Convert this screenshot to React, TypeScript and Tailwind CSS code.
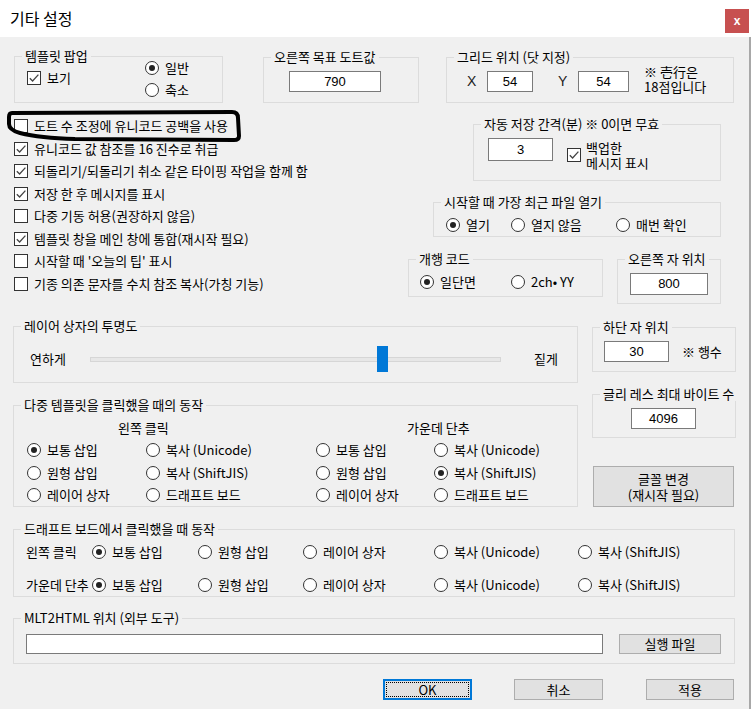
import type { ReactNode } from "react";

function Group({
  label,
  className = "",
  children,
}: {
  label: string;
  className?: string;
  children?: ReactNode;
}) {
  return (
    <div className={`relative shrink-0 border border-[#dcdcdc] ${className}`}>
      <span className="absolute -top-[8px] left-[7px] whitespace-nowrap bg-[#f0f0f0] px-[3px] leading-[14px]">
        {label}
      </span>
      {children}
    </div>
  );
}

function Tick() {
  return (
    <svg width="12" height="12" viewBox="0 0 12 12">
      <path d="M1.8 6.2 L4.6 9 L10.4 2.6" fill="none" stroke="#444" strokeWidth="1.3" />
    </svg>
  );
}

function Check({ on, children, className = "" }: { on?: boolean; children: ReactNode; className?: string }) {
  return (
    <div className={`flex items-center gap-[6px] whitespace-nowrap ${className}`}>
      <span className="flex size-[14px] shrink-0 items-center justify-center border border-[#333] bg-white">
        {on && <Tick />}
      </span>
      <span>{children}</span>
    </div>
  );
}

function Radio({ on, children, className = "" }: { on?: boolean; children: ReactNode; className?: string }) {
  return (
    <div className={`flex h-[14px] items-center gap-[6px] whitespace-nowrap ${className}`}>
      <span className="flex size-[14px] shrink-0 items-center justify-center rounded-full border border-[#333] bg-white">
        {on && <span className="size-[6px] rounded-full bg-[#222]" />}
      </span>
      <span>{children}</span>
    </div>
  );
}

function Field({ value = "", className = "" }: { value?: string; className?: string }) {
  return (
    <div
      className={`flex shrink-0 items-center justify-center border border-[#7a7a7a] bg-white font-['Liberation_Sans',sans-serif] text-[13px] ${className}`}
    >
      {value}
    </div>
  );
}

function Btn({ children, className = "" }: { children: ReactNode; className?: string }) {
  return (
    <div className={`flex shrink-0 items-center justify-center border border-[#adadad] bg-[#e1e1e1] ${className}`}>
      {children}
    </div>
  );
}

const options = [
  { on: false, text: "도트 수 조정에 유니코드 공백을 사용" },
  { on: true, text: "유니코드 값 참조를 16 진수로 취급" },
  { on: true, text: "되돌리기/되돌리기 취소 같은 타이핑 작업을 함께 함" },
  { on: true, text: "저장 한 후 메시지를 표시" },
  { on: false, text: "다중 기동 허용(권장하지 않음)" },
  { on: true, text: "템플릿 창을 메인 창에 통합(재시작 필요)" },
  { on: false, text: "시작할 때 '오늘의 팁' 표시" },
  { on: false, text: "기종 의존 문자를 수치 참조 복사(가칭 기능)" },
];

export default function App() {
  return (
    <div className="relative h-[709px] w-[751px] overflow-hidden bg-[#f0f0f0] font-['Noto_Sans_CJK_KR','Noto_Sans_CJK_JP',sans-serif] text-[13px] leading-[14px] text-black">
      <header className="flex h-[37px] items-start justify-between bg-white">
        <h1 className="ml-[10px] mt-[8px] text-[16px] leading-[20px]">기타 설정</h1>
        <div className="mr-[2px] mt-[9px] flex size-[24px] items-center justify-center bg-[#c75050] font-['Liberation_Sans',sans-serif] text-[12px] font-bold text-white">
          x
        </div>
      </header>

      <div className="h-[672px] border-r-2 border-[#a8a8a8]">
        {/* top row */}
        <div className="flex items-start pt-[19px]">
          <Group label="템플릿 팝업" className="ml-[14px] h-[47px] w-[209px]">
            <div className="grid grid-cols-[118px_auto] items-start pl-[12px]">
              <Check on className="mt-[14px]">보기</Check>
              <div className="mt-[4px] flex flex-col gap-[8px]">
                <Radio on>일반</Radio>
                <Radio>축소</Radio>
              </div>
            </div>
          </Group>
          <Group label="오른쪽 목표 도트값" className="ml-[40px] mt-[1px] h-[46px] w-[156px]">
            <Field value="790" className="ml-[25px] mt-[13px] h-[21px] w-[92px]" />
          </Group>
          <Group label="그리드 위치 (닷 지정)" className="ml-[27px] mt-[1px] h-[46px] w-[288px]">
            <div className="mt-[13px] flex items-start">
              <span className="ml-[20px] w-[20px] font-['Liberation_Sans',sans-serif] text-[14px] leading-[21px] text-[#222]">
                X
              </span>
              <Field value="54" className="h-[21px] w-[46px]" />
              <span className="ml-[25px] w-[20px] font-['Liberation_Sans',sans-serif] text-[14px] leading-[21px] text-[#222]">
                Y
              </span>
              <Field value="54" className="h-[21px] w-[51px]" />
              <div className="ml-[15px] -mt-[7px] leading-[15px]">
                <div>※ 壱行은</div>
                <div>18점입니다</div>
              </div>
            </div>
          </Group>
        </div>

        {/* middle row */}
        <div className="flex items-start">
          <div className="w-[408px] pl-[14px] pt-[12px]">
            {options.map((o) => (
              <Check key={o.text} on={o.on} className="h-[22.5px]">
                {o.text}
              </Check>
            ))}
          </div>
          <div className="flex w-[313px] flex-col">
            <Group label="자동 저장 간격(분) ※ 0이면 무효" className="ml-[65px] mt-[21px] h-[57px] w-[248px]">
              <div className="flex items-start">
                <Field value="3" className="ml-[14px] mt-[13px] h-[23px] w-[65px]" />
                <div className="ml-[14px] mt-[15px] flex items-center gap-[5px] leading-[15px]">
                  <span className="flex size-[14px] shrink-0 items-center justify-center border border-[#333] bg-white">
                    <Tick />
                  </span>
                  <div>
                    <div>백업한</div>
                    <div>메시지 표시</div>
                  </div>
                </div>
              </div>
            </Group>
            <Group label="시작할 때 가장 최근 파일 열기" className="ml-[25px] mt-[21px] h-[35px] w-[288px]">
              <div className="mt-[15px] grid grid-cols-[65px_105px_auto] pl-[12px]">
                <Radio on>열기</Radio>
                <Radio>열지 않음</Radio>
                <Radio>매번 확인</Radio>
              </div>
            </Group>
            <div className="mt-[22px] flex items-start">
              <Group label="개행 코드" className="h-[38px] w-[195px]">
                <div className="mt-[15px] grid grid-cols-[91px_auto] pl-[11px]">
                  <Radio on>일단면</Radio>
                  <Radio>2ch• YY</Radio>
                </div>
              </Group>
              <Group label="오른쪽 자 위치" className="ml-[14px] h-[45px] w-[104px]">
                <Field value="800" className="ml-[12px] mt-[13px] h-[22px] w-[78px]" />
              </Group>
            </div>
          </div>
        </div>

        {/* lower row */}
        <div className="flex items-start">
          <div className="ml-[13px] flex w-[565px] flex-col">
            <Group label="레이어 상자의 투명도" className="mt-[22px] h-[57px]">
              <div className="mt-[25px] flex h-[14px] items-center">
                <span className="ml-[16px] w-[60px]">연하게</span>
                <div className="relative h-[5px] w-[411px] border border-[#d6d6d6] bg-[#e7e7e7]">
                  <div className="absolute -top-[12px] left-[286px] h-[26px] w-[11px] bg-[#0078d7]" />
                </div>
                <span className="ml-[33px]">짙게</span>
              </div>
            </Group>
            <Group label="다중 템플릿을 클릭했을 때의 동작" className="mt-[22px] h-[102px]">
              <div className="mt-[15px] flex">
                <span className="w-[393px] pl-[104px]">왼쪽 클릭</span>
                <span>가운데 단추</span>
              </div>
              <div className="mt-[8px] grid grid-cols-[119px_170px_118px_auto] gap-y-[8.5px] pl-[13px]">
                <Radio on>보통 삽입</Radio>
                <Radio>복사 (Unicode)</Radio>
                <Radio>보통 삽입</Radio>
                <Radio>복사 (Unicode)</Radio>
                <Radio>원형 삽입</Radio>
                <Radio>복사 (ShiftJIS)</Radio>
                <Radio>원형 삽입</Radio>
                <Radio on>복사 (ShiftJIS)</Radio>
                <Radio>레이어 상자</Radio>
                <Radio>드래프트 보드</Radio>
                <Radio>레이어 상자</Radio>
                <Radio>드래프트 보드</Radio>
              </div>
            </Group>
          </div>
          <div className="ml-[14px] flex w-[144px] flex-col">
            <Group label="하단 자 위치" className="mt-[23px] h-[45px]">
              <div className="mt-[13px] flex items-center">
                <Field value="30" className="ml-[11px] h-[21px] w-[65px]" />
                <span className="ml-[13px]">※ 행수</span>
              </div>
            </Group>
            <Group label="글리 레스 최대 바이트 수" className="mt-[22px] h-[44px]">
              <Field value="4096" className="ml-[38px] mt-[13px] h-[21px] w-[65px]" />
            </Group>
            <Btn className="ml-[1px] mt-[28px] h-[41px] w-[141px] flex-col leading-[16px]">
              <span>글꼴 변경</span>
              <span>(재시작 필요)</span>
            </Btn>
          </div>
        </div>

        {/* draft board */}
        <Group label="드래프트 보드에서 클릭했을 때 동작" className="ml-[13px] mt-[22px] h-[68px] w-[722px]">
          <div className="mt-[15px] grid grid-cols-[66px_106px_105px_131px_144px_auto] gap-y-[19px] pl-[12px]">
            <span className="whitespace-nowrap">왼쪽 클릭</span>
            <Radio on>보통 삽입</Radio>
            <Radio>원형 삽입</Radio>
            <Radio>레이어 상자</Radio>
            <Radio>복사 (Unicode)</Radio>
            <Radio>복사 (ShiftJIS)</Radio>
            <span className="whitespace-nowrap">가운데 단추</span>
            <Radio on>보통 삽입</Radio>
            <Radio>원형 삽입</Radio>
            <Radio>레이어 상자</Radio>
            <Radio>복사 (Unicode)</Radio>
            <Radio>복사 (ShiftJIS)</Radio>
          </div>
        </Group>

        <Group label="MLT2HTML 위치 (외부 도구)" className="ml-[13px] mt-[21px] h-[46px] w-[722px]">
          <div className="mt-[15px] flex items-start">
            <Field className="ml-[12px] h-[20px] w-[577px]" />
            <Btn className="ml-[16px] h-[20px] w-[102px]">실행 파일</Btn>
          </div>
        </Group>

        <div className="mt-[15px] flex">
          <div className="ml-[383px] h-[21px] w-[89px] border-2 border-[#0078d7] bg-[#e1e1e1] p-[1px]">
            <div className="flex h-full w-full items-center justify-center border border-dotted border-black leading-[12px]">
              OK
            </div>
          </div>
          <Btn className="ml-[42px] h-[21px] w-[89px]">취소</Btn>
          <Btn className="ml-[43px] h-[21px] w-[88px]">적용</Btn>
        </div>
      </div>

      {/* hand-drawn annotation over the first option */}
      <svg
        className="pointer-events-none absolute left-0 top-0"
        width="751"
        height="709"
        viewBox="0 0 751 709"
      >
        <path
          d="M12 113 L232 112 Q238 112 238 118 L239 136 Q239 140 234 140 L75 139 Q40 138 20 133 Q9 130 9 124 L9 117 Q9 113 12 113 Z"
          fill="none"
          stroke="#000"
          strokeWidth="4"
          strokeLinejoin="round"
        />
      </svg>
    </div>
  );
}
